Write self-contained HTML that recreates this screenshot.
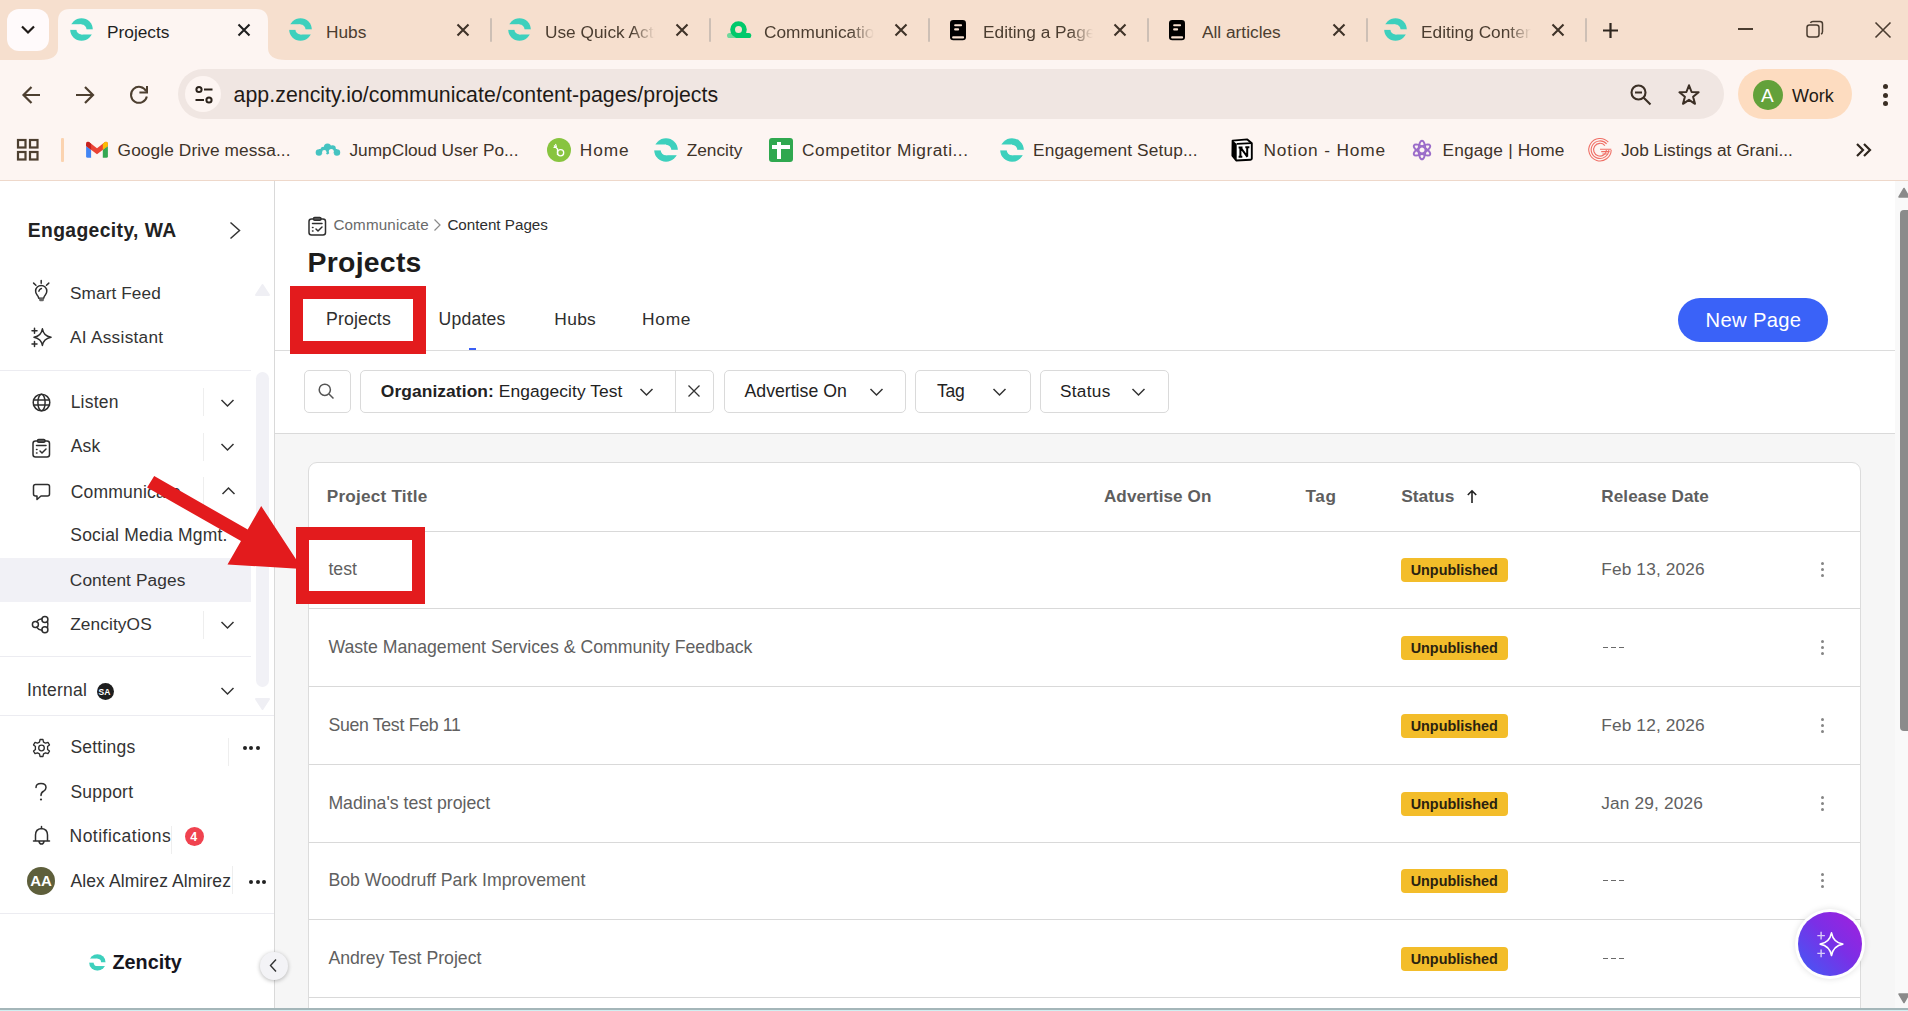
<!DOCTYPE html>
<html><head><meta charset="utf-8"><style>
html,body{margin:0;padding:0;width:1908px;height:1011px;overflow:hidden;background:#fff;}
body{position:relative;font-family:"Liberation Sans",sans-serif;}
.a{position:absolute;}
.t{position:absolute;line-height:1;white-space:nowrap;}
svg{overflow:visible}
</style></head><body>
<div class="a" style="left:0px;top:0px;width:1908px;height:60px;background:#f6dfce;"></div>
<div class="a" style="left:7px;top:9px;width:42px;height:42px;background:#fffafb;border-radius:12px"></div>
<svg class="a" style="left:7px;top:9px" width="42" height="42"><path d="M15 17.5 L21 23.5 L27 17.5" fill="none" stroke="#1f1a17" stroke-width="2.2"/></svg>
<svg class="a" style="left:40px;top:9px" width="246" height="51"><path d="M0 51 Q18 51 18 39 L18 12 Q18 0 30 0 L216 0 Q228 0 228 12 L228 39 Q228 51 246 51 Z" fill="#fdf5f2"/></svg>
<svg class="a" style="left:70px;top:18px;" width="23" height="23" viewBox="0 0 24 24"><defs><mask id="m70_18"><rect width="24" height="24" fill="#fff"/><circle cx="12" cy="12" r="5.3" fill="#000"/><rect x="-1" y="6.5" width="13" height="5.9" fill="#000"/><rect x="12" y="11.8" width="13" height="5.4" fill="#000"/></mask></defs><circle cx="12" cy="12" r="11.8" fill="#3dd0bd" mask="url(#m70_18)"/></svg>
<div class="t " style="left:107.00px;top:24px;font-size:17.3px;color:#1f1f1f;font-weight:400;letter-spacing:0px;width:110px;overflow:hidden;white-space:nowrap;">Projects</div>
<svg class="a" style="left:236.7px;top:23px" width="14" height="14"><path d="M1.5 1.5 L12.5 12.5 M12.5 1.5 L1.5 12.5" stroke="#1f1f1f" stroke-width="2.1"/></svg>
<svg class="a" style="left:289px;top:18px;" width="23" height="23" viewBox="0 0 24 24"><defs><mask id="m289_18"><rect width="24" height="24" fill="#fff"/><circle cx="12" cy="12" r="5.3" fill="#000"/><rect x="-1" y="6.5" width="13" height="5.9" fill="#000"/><rect x="12" y="11.8" width="13" height="5.4" fill="#000"/></mask></defs><circle cx="12" cy="12" r="11.8" fill="#3dd0bd" mask="url(#m289_18)"/></svg>
<div class="t " style="left:326.00px;top:24px;font-size:17.3px;color:#4b3d30;font-weight:400;letter-spacing:0px;width:110px;overflow:hidden;white-space:nowrap;">Hubs</div>
<svg class="a" style="left:455.7px;top:23px" width="14" height="14"><path d="M1.5 1.5 L12.5 12.5 M12.5 1.5 L1.5 12.5" stroke="#3f3328" stroke-width="2.1"/></svg>
<div class="a" style="left:490.3px;top:18px;width:2px;height:24px;background:#cdbfb5;border-radius:1px"></div>
<svg class="a" style="left:508px;top:18px;" width="23" height="23" viewBox="0 0 24 24"><defs><mask id="m508_18"><rect width="24" height="24" fill="#fff"/><circle cx="12" cy="12" r="5.3" fill="#000"/><rect x="-1" y="6.5" width="13" height="5.9" fill="#000"/><rect x="12" y="11.8" width="13" height="5.4" fill="#000"/></mask></defs><circle cx="12" cy="12" r="11.8" fill="#3dd0bd" mask="url(#m508_18)"/></svg>
<div class="t " style="left:545.00px;top:24px;font-size:17.3px;color:#4b3d30;font-weight:400;letter-spacing:0px;width:110px;overflow:hidden;white-space:nowrap;-webkit-mask-image:linear-gradient(90deg,#000 79%,transparent 100%);">Use Quick Actions</div>
<svg class="a" style="left:674.7px;top:23px" width="14" height="14"><path d="M1.5 1.5 L12.5 12.5 M12.5 1.5 L1.5 12.5" stroke="#3f3328" stroke-width="2.1"/></svg>
<div class="a" style="left:709.3px;top:18px;width:2px;height:24px;background:#cdbfb5;border-radius:1px"></div>
<svg class="a" style="left:726px;top:19px" width="28" height="22" viewBox="0 0 28 22"><rect x="1" y="14" width="24.2" height="5.1" rx="2.55" fill="#6fd89c"/><circle cx="12.5" cy="10.6" r="5.9" fill="none" stroke="#00c96b" stroke-width="4.8"/><rect x="9" y="14" width="16.2" height="5.1" rx="2.55" fill="#00c96b"/></svg>
<div class="t " style="left:764.00px;top:24px;font-size:17.3px;color:#4b3d30;font-weight:400;letter-spacing:0px;width:110px;overflow:hidden;white-space:nowrap;-webkit-mask-image:linear-gradient(90deg,#000 79%,transparent 100%);">Communications</div>
<svg class="a" style="left:893.7px;top:23px" width="14" height="14"><path d="M1.5 1.5 L12.5 12.5 M12.5 1.5 L1.5 12.5" stroke="#3f3328" stroke-width="2.1"/></svg>
<div class="a" style="left:928.3px;top:18px;width:2px;height:24px;background:#cdbfb5;border-radius:1px"></div>
<svg class="a" style="left:949.9px;top:19.7px" width="16" height="20.2" viewBox="0 0 16 20.2"><rect x="0" y="0" width="16" height="20.2" rx="3.3" fill="#000"/><rect x="4.1" y="4.2" width="8" height="2.1" rx="1" fill="#f6dfce"/><rect x="4.1" y="8.3" width="5" height="2.1" rx="1" fill="#f6dfce"/><rect x="2.1" y="16.2" width="12" height="2.2" rx="1" fill="#f6dfce"/></svg>
<div class="t " style="left:983.00px;top:24px;font-size:17.3px;color:#4b3d30;font-weight:400;letter-spacing:0px;width:110px;overflow:hidden;white-space:nowrap;-webkit-mask-image:linear-gradient(90deg,#000 79%,transparent 100%);">Editing a Page</div>
<svg class="a" style="left:1112.7px;top:23px" width="14" height="14"><path d="M1.5 1.5 L12.5 12.5 M12.5 1.5 L1.5 12.5" stroke="#3f3328" stroke-width="2.1"/></svg>
<div class="a" style="left:1147.3px;top:18px;width:2px;height:24px;background:#cdbfb5;border-radius:1px"></div>
<svg class="a" style="left:1168.9px;top:19.7px" width="16" height="20.2" viewBox="0 0 16 20.2"><rect x="0" y="0" width="16" height="20.2" rx="3.3" fill="#000"/><rect x="4.1" y="4.2" width="8" height="2.1" rx="1" fill="#f6dfce"/><rect x="4.1" y="8.3" width="5" height="2.1" rx="1" fill="#f6dfce"/><rect x="2.1" y="16.2" width="12" height="2.2" rx="1" fill="#f6dfce"/></svg>
<div class="t " style="left:1202.00px;top:24px;font-size:17.3px;color:#4b3d30;font-weight:400;letter-spacing:0px;width:110px;overflow:hidden;white-space:nowrap;">All articles</div>
<svg class="a" style="left:1331.7px;top:23px" width="14" height="14"><path d="M1.5 1.5 L12.5 12.5 M12.5 1.5 L1.5 12.5" stroke="#3f3328" stroke-width="2.1"/></svg>
<div class="a" style="left:1366.3px;top:18px;width:2px;height:24px;background:#cdbfb5;border-radius:1px"></div>
<svg class="a" style="left:1384px;top:18px;" width="23" height="23" viewBox="0 0 24 24"><defs><mask id="m1384_18"><rect width="24" height="24" fill="#fff"/><circle cx="12" cy="12" r="5.3" fill="#000"/><rect x="-1" y="6.5" width="13" height="5.9" fill="#000"/><rect x="12" y="11.8" width="13" height="5.4" fill="#000"/></mask></defs><circle cx="12" cy="12" r="11.8" fill="#3dd0bd" mask="url(#m1384_18)"/></svg>
<div class="t " style="left:1421.00px;top:24px;font-size:17.3px;color:#4b3d30;font-weight:400;letter-spacing:0px;width:110px;overflow:hidden;white-space:nowrap;-webkit-mask-image:linear-gradient(90deg,#000 79%,transparent 100%);">Editing Content</div>
<svg class="a" style="left:1550.7px;top:23px" width="14" height="14"><path d="M1.5 1.5 L12.5 12.5 M12.5 1.5 L1.5 12.5" stroke="#3f3328" stroke-width="2.1"/></svg>
<div class="a" style="left:1585.3px;top:18px;width:2px;height:24px;background:#cdbfb5;border-radius:1px"></div>
<svg class="a" style="left:1602px;top:22px" width="17" height="17"><path d="M8.5 1 V16 M1 8.5 H16" stroke="#2f261e" stroke-width="2.2"/></svg>
<div class="a" style="left:1738px;top:28px;width:15px;height:1.6px;background:#4b3d30;"></div>
<svg class="a" style="left:1805px;top:20px" width="20" height="20"><rect x="2" y="5" width="12" height="12" rx="2.5" fill="none" stroke="#4b3d30" stroke-width="1.5"/><path d="M5.5 3 Q6 1.5 8 1.5 L15 1.5 Q17.5 1.5 17.5 4 L17.5 11.5 Q17.5 13.5 16 14" fill="none" stroke="#4b3d30" stroke-width="1.5"/></svg>
<svg class="a" style="left:1874px;top:21px" width="18" height="18"><path d="M1.5 1.5 L16.5 16.5 M16.5 1.5 L1.5 16.5" stroke="#4b3d30" stroke-width="1.6"/></svg>
<div class="a" style="left:0px;top:60px;width:1908px;height:120px;background:#fdf5f2;"></div>
<svg class="a" style="left:20px;top:84px" width="22" height="22" viewBox="0 0 22 22"><path d="M20 11 H4 M11.5 3 L3.5 11 L11.5 19" fill="none" stroke="#4d3f30" stroke-width="2.2"/></svg>
<svg class="a" style="left:74px;top:84px" width="22" height="22" viewBox="0 0 22 22"><path d="M2 11 H18.5 M11 3 L19 11 L11 19" fill="none" stroke="#4d3f30" stroke-width="2.2"/></svg>
<svg class="a" style="left:128px;top:84px" width="22" height="22" viewBox="0 0 22 22"><path d="M18.2 7.3 A8 8 0 1 0 18.83 12.5" fill="none" stroke="#4d3f30" stroke-width="2"/><path d="M12.4 8.4 L19 8.4 L19 3" fill="none" stroke="#4d3f30" stroke-width="2" stroke-linecap="square"/></svg>
<div class="a" style="left:178px;top:69px;width:1546px;height:50px;background:#f0e6e2;border-radius:25px"></div>
<div class="a" style="left:185px;top:76px;width:36px;height:36px;background:#fdf5f2;border-radius:50%"></div>
<svg class="a" style="left:193px;top:84px" width="22" height="22" viewBox="0 0 22 22"><circle cx="6" cy="5.5" r="2.6" fill="none" stroke="#2b221b" stroke-width="2"/><path d="M11 5.5 H19.5" stroke="#2b221b" stroke-width="2"/><circle cx="16" cy="16" r="2.6" fill="none" stroke="#2b221b" stroke-width="2"/><path d="M2.5 16 H11" stroke="#2b221b" stroke-width="2"/></svg>
<div class="t " style="left:233.60px;top:85px;font-size:21.3px;color:#1f1a16;font-weight:400;letter-spacing:0.04px;">app.zencity.io/communicate/content-pages/projects</div>
<svg class="a" style="left:1629px;top:83px" width="24" height="24" viewBox="0 0 24 24"><circle cx="9.5" cy="9.5" r="7" fill="none" stroke="#3b2f25" stroke-width="2.1"/><path d="M6 9.5 H13 M14.7 14.7 L21.5 21.5" stroke="#3b2f25" stroke-width="2.1"/></svg>
<svg class="a" style="left:1677px;top:83px" width="24" height="24" viewBox="0 0 24 24"><path d="M12 2.3 L14.6 9 L21.6 9.3 L16.1 13.8 L18 20.8 L12 16.8 L6 20.8 L7.9 13.8 L2.4 9.3 L9.4 9 Z" fill="none" stroke="#3b2f25" stroke-width="2" stroke-linejoin="round"/></svg>
<div class="a" style="left:1738px;top:69px;width:114px;height:50px;background:#fddcc0;border-radius:25px"></div>
<div class="a" style="left:1753px;top:80px;width:30px;height:30px;background:#63a13a;border-radius:50%"></div>
<div class="t " style="left:1761.00px;top:86px;font-size:19px;color:#fff;font-weight:400;letter-spacing:0px;">A</div>
<div class="t " style="left:1792.00px;top:87px;font-size:18px;color:#1f1a15;font-weight:400;letter-spacing:0px;">Work</div>
<div class="a" style="left:1882.5px;top:84.0px;width:5px;height:5px;background:#3b2f25;border-radius:50%"></div>
<div class="a" style="left:1882.5px;top:92.5px;width:5px;height:5px;background:#3b2f25;border-radius:50%"></div>
<div class="a" style="left:1882.5px;top:101.0px;width:5px;height:5px;background:#3b2f25;border-radius:50%"></div>
<svg class="a" style="left:16px;top:138px" width="24" height="24" viewBox="0 0 24 24"><g fill="none" stroke="#4d3f30" stroke-width="2.2"><rect x="2" y="2" width="7.5" height="7.5"/><rect x="14" y="2" width="7.5" height="7.5"/><rect x="2" y="14" width="7.5" height="7.5"/><rect x="14" y="14" width="7.5" height="7.5"/></g></svg>
<div class="a" style="left:61px;top:138px;width:2.5px;height:24px;background:#fbd3b0;border-radius:1px"></div>
<svg class="a" style="left:85px;top:140px" width="24" height="20" viewBox="0 0 24 20"><path d="M1.1 6 L6.1 9.8 L6.1 17.8 L2.6 17.8 Q1.1 17.8 1.1 16.3 Z" fill="#4285f4"/><path d="M22.9 6 L17.8 9.8 L17.8 17.8 L21.4 17.8 Q22.9 17.8 22.9 16.3 Z" fill="#34a853"/><path d="M1.1 6 L1.1 4.2 Q1.1 1.2 4 2 L12 8.2 L20 2 Q22.9 1.2 22.9 4.2 L22.9 6 L12 14.3 Z" fill="#ea4335"/><path d="M17.8 3.7 L20 2 Q22.9 1.2 22.9 4.2 L22.9 6 L17.8 9.8 Z" fill="#fbbc04"/><path d="M1.1 6 L1.1 4.2 Q1.1 1.2 4 2 L6.1 3.7 L6.1 9.8 Z" fill="#c5221f"/></svg>
<div class="t " style="left:117.60px;top:142px;font-size:17.3px;color:#3e3329;font-weight:400;letter-spacing:0.1px;">Google Drive messa...</div>
<svg class="a" style="left:314px;top:141px" width="27" height="17" viewBox="0 0 27 17"><defs><mask id="jcm"><rect width="27" height="17" fill="#fff"/><circle cx="10.3" cy="11.3" r="2.2" fill="#000"/><circle cx="17.3" cy="10.6" r="2.5" fill="#000"/><rect x="7.8" y="12.6" width="4.6" height="5" fill="#000"/><rect x="14.9" y="12.3" width="5.2" height="5" fill="#000"/></mask></defs><g fill="#45c3c1" mask="url(#jcm)"><circle cx="5" cy="11.5" r="3.3"/><circle cx="9.5" cy="8.8" r="3"/><circle cx="13.5" cy="6.2" r="3.6"/><circle cx="18.5" cy="7.6" r="3.3"/><circle cx="22.9" cy="11.5" r="3.3"/><rect x="5" y="8" width="18" height="4.5"/><circle cx="13.3" cy="11.8" r="1.7"/></g></svg>
<div class="t " style="left:349.40px;top:142px;font-size:17.3px;color:#3e3329;font-weight:400;letter-spacing:0px;">JumpCloud User Po...</div>
<div class="a" style="left:546.8px;top:138px;width:24px;height:24px;background:#88c43f;border-radius:50%"></div>
<svg class="a" style="left:546.5px;top:137.5px" width="25" height="25" viewBox="0 0 25 25"><path d="M7 7.5 L10.5 11 L10.5 17" fill="none" stroke="#fff" stroke-width="1.3"/><circle cx="13.6" cy="14.8" r="3.1" fill="none" stroke="#fff" stroke-width="1.3"/><path d="M8.5 6 L9.5 9 M6.5 9.5 L9 9.5" stroke="#fff" stroke-width="1.1"/></svg>
<div class="t " style="left:579.80px;top:142px;font-size:17.3px;color:#3e3329;font-weight:400;letter-spacing:0.9px;">Home</div>
<svg class="a" style="left:653.5px;top:138px;" width="24" height="24" viewBox="0 0 24 24"><defs><mask id="m653_138"><rect width="24" height="24" fill="#fff"/><circle cx="12" cy="12" r="5.3" fill="#000"/><rect x="-1" y="6.5" width="13" height="5.9" fill="#000"/><rect x="12" y="11.8" width="13" height="5.4" fill="#000"/></mask></defs><circle cx="12" cy="12" r="11.8" fill="#3dd0bd" mask="url(#m653_138)"/></svg>
<div class="t " style="left:686.70px;top:142px;font-size:17.3px;color:#3e3329;font-weight:400;letter-spacing:0px;">Zencity</div>
<div class="a" style="left:769px;top:138px;width:24px;height:24px;background:#2fa84f;border-radius:3px"></div>
<div class="a" style="left:771.6px;top:145.3px;width:18.4px;height:4px;background:#fff;"></div>
<div class="a" style="left:776.9px;top:141.5px;width:4px;height:17.1px;background:#fff;"></div>
<div class="t " style="left:802.00px;top:142px;font-size:17.3px;color:#3e3329;font-weight:400;letter-spacing:0.52px;">Competitor Migrati...</div>
<svg class="a" style="left:999.8px;top:138px;" width="24" height="24" viewBox="0 0 24 24"><defs><mask id="m999_138"><rect width="24" height="24" fill="#fff"/><circle cx="12" cy="12" r="5.3" fill="#000"/><rect x="-1" y="6.5" width="13" height="5.9" fill="#000"/><rect x="12" y="11.8" width="13" height="5.4" fill="#000"/></mask></defs><circle cx="12" cy="12" r="11.8" fill="#3dd0bd" mask="url(#m999_138)"/></svg>
<div class="t " style="left:1033.00px;top:142px;font-size:17.3px;color:#3e3329;font-weight:400;letter-spacing:0.12px;">Engagement Setup...</div>
<svg class="a" style="left:1230px;top:137px" width="24" height="25" viewBox="0 0 24 25"><path d="M2.6 3.6 L17.3 2.4 L21.8 6.2 L21.8 21.4 Q21.8 22.6 20.5 22.7 L6.2 23.5 L2.4 18.6 Z" fill="#fff" stroke="#000" stroke-width="1.9" stroke-linejoin="round"/><path d="M2.6 3.6 L6.7 6.9 L6.7 23.2 L2.4 18.6 Z" fill="#000"/><path d="M6.7 6.9 L21.8 6.2" stroke="#000" stroke-width="1.8"/><path d="M10.4 10.5 V19.8 M10.6 10.5 L17.4 19.8 M17.2 10.2 V19.8 M8.6 10.5 H12.5 M15.3 10.2 H19.4 M8.6 19.8 H12.3" stroke="#000" stroke-width="2" fill="none"/></svg>
<div class="t " style="left:1263.50px;top:142px;font-size:17.3px;color:#3e3329;font-weight:400;letter-spacing:0.85px;">Notion - Home</div>
<svg class="a" style="left:1410px;top:138px" width="24" height="24" viewBox="0 0 24 24"><g fill="none" stroke="#9b6cc9" stroke-width="1.9"><ellipse cx="12" cy="12" rx="3.4" ry="9.3"/><ellipse cx="12" cy="12" rx="3.4" ry="9.3" transform="rotate(60 12 12)"/><ellipse cx="12" cy="12" rx="3.4" ry="9.3" transform="rotate(120 12 12)"/></g></svg>
<div class="t " style="left:1442.50px;top:142px;font-size:17.3px;color:#3e3329;font-weight:400;letter-spacing:0.18px;">Engage | Home</div>
<svg class="a" style="left:1587px;top:137px" width="26" height="26" viewBox="0 0 26 26"><g fill="none" stroke="#ef6f66" stroke-width="1.1"><path d="M21.3 5.2 A11.2 11.2 0 1 0 24.2 13"/><path d="M19.6 6.9 A8.8 8.8 0 1 0 21.8 13"/><path d="M17.9 8.6 A6.4 6.4 0 1 0 19.4 13"/><path d="M13 12.2 H24.3 M14.2 14.6 H22.6 M15.4 17 H20.6"/></g></svg>
<div class="t " style="left:1620.90px;top:142px;font-size:17.3px;color:#3e3329;font-weight:400;letter-spacing:0px;">Job Listings at Grani...</div>
<svg class="a" style="left:1855px;top:142px" width="17" height="16" viewBox="0 0 17 16"><path d="M2 2 L8 8 L2 14 M9 2 L15 8 L9 14" fill="none" stroke="#2f261e" stroke-width="2.2"/></svg>
<div class="a" style="left:0px;top:180px;width:1908px;height:1px;background:#eed8ca;"></div>
<div class="a" style="left:0px;top:181px;width:274px;height:830px;background:#ffffff;"></div>
<div class="a" style="left:274px;top:181px;width:1.2px;height:830px;background:#d9d9d9;"></div>
<div class="t " style="left:27.70px;top:221px;font-size:19.3px;color:#222;font-weight:700;letter-spacing:0.4px;">Engagecity, WA</div>
<svg class="a" style="left:229px;top:221px" width="13" height="19" viewBox="0 0 13 19"><path d="M1.5 1.5 L10.5 9.5 L1.5 17.5" fill="none" stroke="#333" stroke-width="1.5"/></svg>
<svg class="a" style="left:30px;top:278px" width="24" height="25" viewBox="0 0 24 25"><g fill="none" stroke="#2e2e2e" stroke-width="1.5" stroke-linecap="round" stroke-linejoin="round"><path d="M11.2 2.4 V5.3 M3.6 5.1 L5.9 7.2 M18.8 5.1 L16.5 7.2"/><path d="M8.7 20.2 Q8.4 18.3 7.1 16.9 A5.6 5.6 0 1 1 15.3 16.9 Q14 18.3 13.7 20.2 Z"/><path d="M8.9 13.2 Q9.3 11.2 11.4 10.5"/></g><rect x="9.1" y="20" width="4.8" height="3.3" rx="1.3" fill="#666"/></svg>
<svg class="a" style="left:30px;top:326px" width="24" height="22" viewBox="0 0 24 22"><g fill="none" stroke="#2e2e2e" stroke-width="1.5" stroke-linecap="round" stroke-linejoin="round"><path d="M12.4 2.8 Q13.5 9.8 21 11.3 Q13.5 12.8 12.4 19.5 Q11.3 12.8 4 11.3 Q11.3 9.8 12.4 2.8 Z"/><path d="M4.5 2.3 V7.3 M2 4.8 H7 M4.5 15.5 V20.5 M2 18 H7"/></g></svg>
<div class="t " style="left:70.00px;top:285px;font-size:17.2px;color:#333333;font-weight:400;letter-spacing:0.1px;">Smart Feed</div>
<div class="t " style="left:70.00px;top:329px;font-size:17.2px;color:#333333;font-weight:400;letter-spacing:0.3px;">AI Assistant</div>
<div class="a" style="left:0px;top:370px;width:251px;height:1px;background:#ececf1;"></div>
<svg class="a" style="left:254px;top:283px" width="17" height="14"><path d="M8.5 2 L15 12 L2 12 Z" fill="#efeff4" stroke="#efeff4" stroke-width="2" stroke-linejoin="round"/></svg>
<div class="a" style="left:256px;top:372px;width:13px;height:315px;background:#f1f1f6;border-radius:7px"></div>
<svg class="a" style="left:254px;top:697px" width="17" height="14"><path d="M8.5 12 L15 2 L2 2 Z" fill="#efeff4" stroke="#efeff4" stroke-width="2" stroke-linejoin="round"/></svg>
<svg class="a" style="left:31px;top:392px" width="21" height="21" viewBox="0 0 21 21"><g fill="none" stroke="#2e2e2e" stroke-width="1.5" stroke-linecap="round" stroke-linejoin="round"><circle cx="10.5" cy="10.5" r="8.3"/><ellipse cx="10.5" cy="10.5" rx="3.6" ry="8.3"/><path d="M2.5 8 H18.5 M2.5 13 H18.5"/></g></svg>
<div class="t " style="left:70.70px;top:394px;font-size:17.5px;color:#333333;font-weight:400;letter-spacing:0.2px;">Listen</div>
<svg class="a" style="left:31px;top:437px" width="21" height="22" viewBox="0 0 21 22"><g fill="none" stroke="#2e2e2e" stroke-width="1.5" stroke-linecap="round" stroke-linejoin="round"><rect x="2" y="4" width="16.5" height="16" rx="2.5"/><rect x="6.5" y="2.4" width="7.5" height="2.8" rx="1.2"/><path d="M5.5 8.5 H15 M5.5 12.5 H6 M5.5 16 H6 M9 14 L11 16 L15 12"/></g></svg>
<div class="t " style="left:70.70px;top:438px;font-size:17.5px;color:#333333;font-weight:400;letter-spacing:0.2px;">Ask</div>
<svg class="a" style="left:31px;top:482px" width="21" height="21" viewBox="0 0 21 21"><g fill="none" stroke="#2e2e2e" stroke-width="1.5" stroke-linecap="round" stroke-linejoin="round"><path d="M4.5 2.5 H16.5 Q18.5 2.5 18.5 4.5 L18.5 12 Q18.5 14 16.5 14 L10 14 L6 17.5 L6 14 L4.5 14 Q2.5 14 2.5 12 L2.5 4.5 Q2.5 2.5 4.5 2.5 Z"/></g></svg>
<div class="t " style="left:70.70px;top:484px;font-size:17.5px;color:#333333;font-weight:400;letter-spacing:0.2px;">Communicate</div>
<svg class="a" style="left:220px;top:398px" width="15" height="10" viewBox="0 0 15 10"><path d="M1.5 2 L7.5 8 L13.5 2" fill="none" stroke="#333" stroke-width="1.5"/></svg>
<div class="a" style="left:202.5px;top:388px;width:1px;height:28px;background:#eeeeee;"></div>
<svg class="a" style="left:220px;top:442px" width="15" height="10" viewBox="0 0 15 10"><path d="M1.5 2 L7.5 8 L13.5 2" fill="none" stroke="#333" stroke-width="1.5"/></svg>
<div class="a" style="left:203px;top:433px;width:1px;height:28px;background:#eeeeee;"></div>
<svg class="a" style="left:221px;top:486px" width="15" height="10" viewBox="0 0 15 10"><path d="M1.5 8 L7.5 2 L13.5 8" fill="none" stroke="#333" stroke-width="1.5"/></svg>
<div class="a" style="left:203px;top:477px;width:1px;height:28px;background:#eeeeee;"></div>
<div class="a" style="left:0px;top:558px;width:251px;height:44px;background:#f1f1f6;"></div>
<div class="t " style="left:70.30px;top:527px;font-size:17.5px;color:#333333;font-weight:400;letter-spacing:0.2px;">Social Media Mgmt.</div>
<div class="t " style="left:69.80px;top:572px;font-size:17.3px;color:#333333;font-weight:400;letter-spacing:0.1px;">Content Pages</div>
<svg class="a" style="left:30px;top:613px" width="22" height="22" viewBox="0 0 22 22"><g fill="none" stroke="#2e2e2e" stroke-width="1.5" stroke-linecap="round" stroke-linejoin="round"><circle cx="5.4" cy="11.4" r="3"/><circle cx="14.9" cy="6.4" r="3"/><circle cx="14.9" cy="16.7" r="3"/><path d="M6.6 8.6 Q8.5 6 12 5.8 M6.6 14.2 Q8.5 17 12 17.2 M17.5 8.5 Q18.3 11.5 17.5 14.6"/></g></svg>
<div class="t " style="left:70.20px;top:616px;font-size:17.3px;color:#333333;font-weight:400;letter-spacing:0.1px;">ZencityOS</div>
<svg class="a" style="left:220px;top:620px" width="15" height="10" viewBox="0 0 15 10"><path d="M1.5 2 L7.5 8 L13.5 2" fill="none" stroke="#333" stroke-width="1.5"/></svg>
<div class="a" style="left:203px;top:611px;width:1px;height:28px;background:#eeeeee;"></div>
<div class="a" style="left:0px;top:656px;width:251px;height:1px;background:#ececf1;"></div>
<div class="t " style="left:27.00px;top:682px;font-size:17.5px;color:#333333;font-weight:400;letter-spacing:0.2px;">Internal</div>
<div class="a" style="left:96.5px;top:683px;width:17px;height:17px;background:#1e1e1e;border-radius:50%"></div>
<div class="t " style="left:98.60px;top:688px;font-size:8.5px;color:#fff;font-weight:700;letter-spacing:0px;">SA</div>
<svg class="a" style="left:220px;top:686px" width="15" height="10" viewBox="0 0 15 10"><path d="M1.5 2 L7.5 8 L13.5 2" fill="none" stroke="#333" stroke-width="1.5"/></svg>
<div class="a" style="left:0px;top:715px;width:274px;height:1px;background:#ececf1;"></div>
<svg class="a" style="left:31px;top:737px" width="21" height="22" viewBox="0 0 24 24"><g fill="none" stroke="#2e2e2e" stroke-width="1.5" stroke-linecap="round" stroke-linejoin="round" stroke-width="1.6"><path d="M10.3 2.3 H13.7 L14.3 5.2 Q15.6 5.7 16.6 6.5 L19.4 5.5 L21.1 8.5 L18.9 10.4 Q19.1 12 18.9 13.6 L21.1 15.5 L19.4 18.5 L16.6 17.5 Q15.6 18.3 14.3 18.8 L13.7 21.7 H10.3 L9.7 18.8 Q8.4 18.3 7.4 17.5 L4.6 18.5 L2.9 15.5 L5.1 13.6 Q4.9 12 5.1 10.4 L2.9 8.5 L4.6 5.5 L7.4 6.5 Q8.4 5.7 9.7 5.2 Z"/><circle cx="12" cy="12" r="3.2"/></g></svg>
<div class="t " style="left:70.50px;top:739px;font-size:17.5px;color:#333333;font-weight:400;letter-spacing:0.2px;">Settings</div>
<div class="a" style="left:228px;top:738px;width:1px;height:28px;background:#eeeeee;"></div>
<div class="a" style="left:242.5px;top:746px;width:4px;height:4px;background:#222;border-radius:50%"></div>
<div class="a" style="left:249px;top:746px;width:4px;height:4px;background:#222;border-radius:50%"></div>
<div class="a" style="left:255.5px;top:746px;width:4px;height:4px;background:#222;border-radius:50%"></div>
<svg class="a" style="left:33px;top:781px" width="16" height="22" viewBox="0 0 16 22"><g fill="none" stroke="#2e2e2e" stroke-width="1.5" stroke-linecap="round" stroke-linejoin="round" stroke-width="1.6"><path d="M3 6.5 Q3 2.5 8 2.5 Q13 2.5 13 6.5 Q13 9 10.5 10.3 Q8 11.5 8 14.5"/></g><circle cx="8" cy="18.5" r="1.1" fill="#2e2e2e"/></svg>
<div class="t " style="left:70.50px;top:784px;font-size:17.5px;color:#333333;font-weight:400;letter-spacing:0.2px;">Support</div>
<svg class="a" style="left:31px;top:825px" width="21" height="21" viewBox="0 0 21 21"><g fill="none" stroke="#2e2e2e" stroke-width="1.5" stroke-linecap="round" stroke-linejoin="round" stroke-width="1.6"><path d="M2.5 16 H18.5 M4.5 16 L4.5 10 Q4.5 4 10.5 3.5 Q16.5 4 16.5 10 L16.5 16 M8 16.5 Q8.5 19 10.5 19 Q12.5 19 13 16.5 M10.5 1.5 V3.5"/></g></svg>
<div class="t " style="left:69.50px;top:828px;font-size:17.5px;color:#333333;font-weight:400;letter-spacing:0.5px;">Notifications</div>
<div class="a" style="left:171px;top:826px;width:1px;height:28px;background:#eeeeee;"></div>
<div class="a" style="left:185px;top:827px;width:19px;height:19px;background:#f0424f;border-radius:50%"></div>
<div class="t " style="left:190.30px;top:831px;font-size:12.5px;color:#fff;font-weight:700;letter-spacing:0px;">4</div>
<div class="a" style="left:26.7px;top:866.5px;width:28.6px;height:28.6px;background:#5e5f3b;border-radius:50%"></div>
<div class="t " style="left:30.20px;top:873px;font-size:15px;color:#fff;font-weight:700;letter-spacing:0px;">AA</div>
<div class="t " style="left:70.50px;top:873px;font-size:17.5px;color:#333333;font-weight:400;letter-spacing:0.1px;">Alex Almirez Almirez</div>
<div class="a" style="left:232px;top:866px;width:1px;height:28px;background:#eeeeee;"></div>
<div class="a" style="left:249px;top:879.5px;width:4px;height:4px;background:#222;border-radius:50%"></div>
<div class="a" style="left:255.5px;top:879.5px;width:4px;height:4px;background:#222;border-radius:50%"></div>
<div class="a" style="left:262px;top:879.5px;width:4px;height:4px;background:#222;border-radius:50%"></div>
<div class="a" style="left:0px;top:913px;width:274px;height:1px;background:#ececf1;"></div>
<svg class="a" style="left:88.7px;top:953.5px;" width="16.8" height="16.8" viewBox="0 0 24 24"><defs><mask id="m88_953"><rect width="24" height="24" fill="#fff"/><circle cx="12" cy="12" r="5.3" fill="#000"/><rect x="-1" y="6.5" width="13" height="5.9" fill="#000"/><rect x="12" y="11.8" width="13" height="5.4" fill="#000"/></mask></defs><circle cx="12" cy="12" r="11.8" fill="#3dd0bd" mask="url(#m88_953)"/></svg>
<div class="t " style="left:112.50px;top:953px;font-size:19.8px;color:#16161e;font-weight:700;letter-spacing:0px;">Zencity</div>
<div class="a" style="left:275px;top:181px;width:1620px;height:252px;background:#ffffff;"></div>
<svg class="a" style="left:307px;top:215px" width="21" height="22" viewBox="0 0 21 22"><g fill="none" stroke="#2e2e2e" stroke-width="1.5" stroke-linecap="round" stroke-linejoin="round"><rect x="2" y="4" width="16.5" height="16" rx="2.5"/><rect x="6.5" y="2.4" width="7.5" height="2.8" rx="1.2"/><path d="M5.5 8.5 H15 M5.5 12.5 H6 M5.5 16 H6 M9 14 L11 16 L15 12"/></g></svg>
<div class="t " style="left:333.40px;top:217px;font-size:15.2px;color:#6a6a6a;font-weight:400;letter-spacing:0.15px;">Communicate</div>
<svg class="a" style="left:433px;top:218px" width="9" height="14" viewBox="0 0 9 14"><path d="M1.5 1.5 L7 7 L1.5 12.5" fill="none" stroke="#8a8a8a" stroke-width="1.2"/></svg>
<div class="t " style="left:447.40px;top:217px;font-size:15.2px;color:#2e2e2e;font-weight:400;letter-spacing:0px;">Content Pages</div>
<div class="t " style="left:307.60px;top:248px;font-size:28.4px;color:#1c1c1c;font-weight:700;letter-spacing:0.25px;">Projects</div>
<div class="t " style="left:326.00px;top:311px;font-size:17.7px;color:#2e2e2e;font-weight:400;letter-spacing:0.12px;">Projects</div>
<div class="t " style="left:438.60px;top:311px;font-size:17.6px;color:#2e2e2e;font-weight:400;letter-spacing:0.2px;">Updates</div>
<div class="t " style="left:554.30px;top:311px;font-size:17.4px;color:#2e2e2e;font-weight:400;letter-spacing:0.3px;">Hubs</div>
<div class="t " style="left:642.00px;top:311px;font-size:17.4px;color:#2e2e2e;font-weight:400;letter-spacing:0.7px;">Home</div>
<div class="a" style="left:469px;top:347.5px;width:7px;height:2.5px;background:#3a5ef5;"></div>
<div class="a" style="left:275px;top:350px;width:1620px;height:1px;background:#dcdcdc;"></div>
<div class="a" style="left:1678px;top:298px;width:150px;height:44px;background:#3a62f8;border-radius:22px"></div>
<div class="t " style="left:1705.50px;top:310px;font-size:20.2px;color:#ffffff;font-weight:400;letter-spacing:0.35px;">New Page</div>
<div class="a" style="left:303.5px;top:370px;width:47px;height:43px;background:#fff;border:1px solid #dadada;border-radius:5px;box-sizing:border-box;background:#fff"></div>
<svg class="a" style="left:317px;top:382px" width="19" height="19" viewBox="0 0 19 19"><g fill="none" stroke="#555" stroke-width="1.5"><circle cx="7.8" cy="7.8" r="5.6"/><path d="M12 12 L16.5 16.5"/></g></svg>
<div class="a" style="left:360.4px;top:370px;width:353.6px;height:43px;background:#fff;border:1px solid #dadada;border-radius:5px;box-sizing:border-box;background:#fff"></div>
<div class="a" style="left:675px;top:371px;width:1px;height:41px;background:#dadada;"></div>
<div class="t " style="left:380.80px;top:383px;font-size:17.4px;color:#222;font-weight:400;letter-spacing:0.08px;"><b>Organization:</b> Engagecity Test</div>
<svg class="a" style="left:638.5px;top:387px" width="15" height="10" viewBox="0 0 15 10"><path d="M1.5 2 L7.5 8 L13.5 2" fill="none" stroke="#333" stroke-width="1.5"/></svg>
<svg class="a" style="left:687px;top:384px" width="14" height="14" viewBox="0 0 14 14"><path d="M1.5 1.5 L12.5 12.5 M12.5 1.5 L1.5 12.5" stroke="#333" stroke-width="1.3"/></svg>
<div class="a" style="left:724.4px;top:370px;width:181.5px;height:43px;background:#fff;border:1px solid #dadada;border-radius:5px;box-sizing:border-box;background:#fff"></div>
<div class="t " style="left:744.50px;top:383px;font-size:17.7px;color:#222;font-weight:400;letter-spacing:0px;">Advertise On</div>
<svg class="a" style="left:868.5px;top:387px" width="15" height="10" viewBox="0 0 15 10"><path d="M1.5 2 L7.5 8 L13.5 2" fill="none" stroke="#333" stroke-width="1.5"/></svg>
<div class="a" style="left:915.4px;top:370px;width:115.5px;height:43px;background:#fff;border:1px solid #dadada;border-radius:5px;box-sizing:border-box;background:#fff"></div>
<div class="t " style="left:937.00px;top:383px;font-size:17.5px;color:#222;font-weight:400;letter-spacing:-0.2px;">Tag</div>
<svg class="a" style="left:992px;top:387px" width="15" height="10" viewBox="0 0 15 10"><path d="M1.5 2 L7.5 8 L13.5 2" fill="none" stroke="#333" stroke-width="1.5"/></svg>
<div class="a" style="left:1040px;top:370px;width:129px;height:43px;background:#fff;border:1px solid #dadada;border-radius:5px;box-sizing:border-box;background:#fff"></div>
<div class="t " style="left:1060.00px;top:383px;font-size:17.2px;color:#222;font-weight:400;letter-spacing:0.3px;">Status</div>
<svg class="a" style="left:1131px;top:387px" width="15" height="10" viewBox="0 0 15 10"><path d="M1.5 2 L7.5 8 L13.5 2" fill="none" stroke="#333" stroke-width="1.5"/></svg>
<div class="a" style="left:275px;top:433px;width:1620px;height:1px;background:#dadada;"></div>
<div class="a" style="left:275px;top:434px;width:1620px;height:577px;background:#f6f6f6;"></div>
<div class="a" style="left:308px;top:462px;width:1553px;height:600px;background:#fff;border:1px solid #dcdcdc;border-radius:9px;box-sizing:border-box"></div>
<div class="t " style="left:326.80px;top:488px;font-size:17.2px;color:#5e5e5e;font-weight:700;letter-spacing:0.2px;">Project Title</div>
<div class="t " style="left:1103.90px;top:488px;font-size:17.1px;color:#5e5e5e;font-weight:700;letter-spacing:0.1px;">Advertise On</div>
<div class="t " style="left:1305.50px;top:488px;font-size:17.2px;color:#5e5e5e;font-weight:700;letter-spacing:0.6px;">Tag</div>
<div class="t " style="left:1401.20px;top:488px;font-size:17.4px;color:#5e5e5e;font-weight:700;letter-spacing:0px;">Status</div>
<svg class="a" style="left:1466px;top:489px" width="12" height="15" viewBox="0 0 12 15"><path d="M6 14 V2 M1.8 6 L6 1.8 L10.2 6" fill="none" stroke="#222" stroke-width="1.6"/></svg>
<div class="t " style="left:1601.30px;top:488px;font-size:17.1px;color:#5e5e5e;font-weight:700;letter-spacing:0.1px;">Release Date</div>
<div class="a" style="left:309px;top:531px;width:1551px;height:1px;background:#d9d9d9;"></div>
<div class="t " style="left:328.40px;top:561px;font-size:17.7px;color:#606060;font-weight:400;letter-spacing:0px;">test</div>
<div class="a" style="left:1401px;top:558px;width:107px;height:23.5px;background:#f3bd2a;border-radius:4px"></div>
<div class="t " style="left:1410.70px;top:563px;font-size:14.4px;color:#2a2210;font-weight:700;letter-spacing:0px;">Unpublished</div>
<div class="t " style="left:1601.20px;top:561px;font-size:17.3px;color:#606060;font-weight:400;letter-spacing:0.15px;">Feb 13, 2026</div>
<div class="a" style="left:1820.6px;top:561.5999999999999px;width:3.2px;height:3.2px;background:#858585;border-radius:50%"></div>
<div class="a" style="left:1820.6px;top:567.6999999999999px;width:3.2px;height:3.2px;background:#858585;border-radius:50%"></div>
<div class="a" style="left:1820.6px;top:573.8px;width:3.2px;height:3.2px;background:#858585;border-radius:50%"></div>
<div class="a" style="left:309px;top:608px;width:1551px;height:1px;background:#d9d9d9;"></div>
<div class="t " style="left:328.40px;top:639px;font-size:17.7px;color:#606060;font-weight:400;letter-spacing:0px;">Waste Management Services &amp; Community Feedback</div>
<div class="a" style="left:1401px;top:636px;width:107px;height:23.5px;background:#f3bd2a;border-radius:4px"></div>
<div class="t " style="left:1410.70px;top:641px;font-size:14.4px;color:#2a2210;font-weight:700;letter-spacing:0px;">Unpublished</div>
<div class="a" style="left:1603.0px;top:646.9px;width:5.4px;height:1.5px;background:#6a6a6a;"></div>
<div class="a" style="left:1610.75px;top:646.9px;width:5.4px;height:1.5px;background:#6a6a6a;"></div>
<div class="a" style="left:1618.5px;top:646.9px;width:5.4px;height:1.5px;background:#6a6a6a;"></div>
<div class="a" style="left:1820.6px;top:639.5999999999999px;width:3.2px;height:3.2px;background:#858585;border-radius:50%"></div>
<div class="a" style="left:1820.6px;top:645.6999999999999px;width:3.2px;height:3.2px;background:#858585;border-radius:50%"></div>
<div class="a" style="left:1820.6px;top:651.8px;width:3.2px;height:3.2px;background:#858585;border-radius:50%"></div>
<div class="a" style="left:309px;top:686px;width:1551px;height:1px;background:#d9d9d9;"></div>
<div class="t " style="left:328.40px;top:717px;font-size:17.7px;color:#606060;font-weight:400;letter-spacing:-0.3px;">Suen Test Feb 11</div>
<div class="a" style="left:1401px;top:714px;width:107px;height:23.5px;background:#f3bd2a;border-radius:4px"></div>
<div class="t " style="left:1410.70px;top:719px;font-size:14.4px;color:#2a2210;font-weight:700;letter-spacing:0px;">Unpublished</div>
<div class="t " style="left:1601.20px;top:717px;font-size:17.3px;color:#606060;font-weight:400;letter-spacing:0.15px;">Feb 12, 2026</div>
<div class="a" style="left:1820.6px;top:717.5999999999999px;width:3.2px;height:3.2px;background:#858585;border-radius:50%"></div>
<div class="a" style="left:1820.6px;top:723.6999999999999px;width:3.2px;height:3.2px;background:#858585;border-radius:50%"></div>
<div class="a" style="left:1820.6px;top:729.8px;width:3.2px;height:3.2px;background:#858585;border-radius:50%"></div>
<div class="a" style="left:309px;top:764px;width:1551px;height:1px;background:#d9d9d9;"></div>
<div class="t " style="left:328.40px;top:795px;font-size:17.7px;color:#606060;font-weight:400;letter-spacing:0px;">Madina's test project</div>
<div class="a" style="left:1401px;top:792px;width:107px;height:23.5px;background:#f3bd2a;border-radius:4px"></div>
<div class="t " style="left:1410.70px;top:797px;font-size:14.4px;color:#2a2210;font-weight:700;letter-spacing:0px;">Unpublished</div>
<div class="t " style="left:1601.20px;top:795px;font-size:17.3px;color:#606060;font-weight:400;letter-spacing:0.15px;">Jan 29, 2026</div>
<div class="a" style="left:1820.6px;top:795.5999999999999px;width:3.2px;height:3.2px;background:#858585;border-radius:50%"></div>
<div class="a" style="left:1820.6px;top:801.6999999999999px;width:3.2px;height:3.2px;background:#858585;border-radius:50%"></div>
<div class="a" style="left:1820.6px;top:807.8px;width:3.2px;height:3.2px;background:#858585;border-radius:50%"></div>
<div class="a" style="left:309px;top:842px;width:1551px;height:1px;background:#d9d9d9;"></div>
<div class="t " style="left:328.40px;top:872px;font-size:17.7px;color:#606060;font-weight:400;letter-spacing:0px;">Bob Woodruff Park Improvement</div>
<div class="a" style="left:1401px;top:869px;width:107px;height:23.5px;background:#f3bd2a;border-radius:4px"></div>
<div class="t " style="left:1410.70px;top:874px;font-size:14.4px;color:#2a2210;font-weight:700;letter-spacing:0px;">Unpublished</div>
<div class="a" style="left:1603.0px;top:879.9px;width:5.4px;height:1.5px;background:#6a6a6a;"></div>
<div class="a" style="left:1610.75px;top:879.9px;width:5.4px;height:1.5px;background:#6a6a6a;"></div>
<div class="a" style="left:1618.5px;top:879.9px;width:5.4px;height:1.5px;background:#6a6a6a;"></div>
<div class="a" style="left:1820.6px;top:872.5999999999999px;width:3.2px;height:3.2px;background:#858585;border-radius:50%"></div>
<div class="a" style="left:1820.6px;top:878.6999999999999px;width:3.2px;height:3.2px;background:#858585;border-radius:50%"></div>
<div class="a" style="left:1820.6px;top:884.8px;width:3.2px;height:3.2px;background:#858585;border-radius:50%"></div>
<div class="a" style="left:309px;top:919px;width:1551px;height:1px;background:#d9d9d9;"></div>
<div class="t " style="left:328.40px;top:950px;font-size:17.7px;color:#606060;font-weight:400;letter-spacing:0px;">Andrey Test Project</div>
<div class="a" style="left:1401px;top:947px;width:107px;height:23.5px;background:#f3bd2a;border-radius:4px"></div>
<div class="t " style="left:1410.70px;top:952px;font-size:14.4px;color:#2a2210;font-weight:700;letter-spacing:0px;">Unpublished</div>
<div class="a" style="left:1603.0px;top:957.9px;width:5.4px;height:1.5px;background:#6a6a6a;"></div>
<div class="a" style="left:1610.75px;top:957.9px;width:5.4px;height:1.5px;background:#6a6a6a;"></div>
<div class="a" style="left:1618.5px;top:957.9px;width:5.4px;height:1.5px;background:#6a6a6a;"></div>
<div class="a" style="left:1820.6px;top:950.5999999999999px;width:3.2px;height:3.2px;background:#858585;border-radius:50%"></div>
<div class="a" style="left:1820.6px;top:956.6999999999999px;width:3.2px;height:3.2px;background:#858585;border-radius:50%"></div>
<div class="a" style="left:1820.6px;top:962.8px;width:3.2px;height:3.2px;background:#858585;border-radius:50%"></div>
<div class="a" style="left:309px;top:997px;width:1551px;height:1px;background:#d9d9d9;"></div>
<div class="a" style="left:1895px;top:181px;width:13px;height:830px;background:#f9f9f9;"></div>
<svg class="a" style="left:1897px;top:187px" width="12" height="12"><path d="M7 1.5 L12 10 L2 10 Z" fill="#8a8a8a" stroke="#8a8a8a" stroke-width="1.5" stroke-linejoin="round"/></svg>
<div class="a" style="left:1900px;top:209.5px;width:10px;height:521px;background:#8b8b8b;border-radius:4px 0 0 4px"></div>
<svg class="a" style="left:1897px;top:993px" width="12" height="12"><path d="M7 9.5 L12 1 L2 1 Z" fill="#8a8a8a" stroke="#8a8a8a" stroke-width="1.5" stroke-linejoin="round"/></svg>
<div class="a" style="left:1795px;top:909px;width:70px;height:70px;background:#fff;border-radius:50%;box-shadow:0 0 6px rgba(0,0,0,0.12)"></div>
<div class="a" style="left:1798px;top:912px;width:64px;height:64px;background:linear-gradient(45deg,#3f5cf6 0%,#7b2fe6 55%,#a31fdc 100%);border-radius:50%"></div>
<svg class="a" style="left:1812px;top:926px" width="36" height="36" viewBox="0 0 36 36"><path d="M19.5 6.8 Q21.3 16.3 30.8 18.1 Q21.3 19.9 19.5 29.5 Q17.7 19.9 8.2 18.1 Q17.7 16.3 19.5 6.8 Z" fill="none" stroke="#fff" stroke-width="1.6" stroke-linejoin="round"/><path d="M9.1 5.8 V13.4 M5.3 9.6 H12.9 M9.1 23.6 V31.2 M5.3 27.4 H12.9" stroke="#fff" stroke-opacity="0.75" stroke-width="1.4"/></svg>
<div class="a" style="left:259.5px;top:951.5px;width:28px;height:28px;background:#f3f3f6;border-radius:50%;box-shadow:0 1px 4px rgba(0,0,0,0.28)"></div>
<svg class="a" style="left:268px;top:958px" width="10" height="15" viewBox="0 0 10 15"><path d="M8 1.5 L2.5 7.5 L8 13.5" fill="none" stroke="#333" stroke-width="1.4"/></svg>
<div class="a" style="left:290.4px;top:286px;width:135.6px;height:67.7px;background:transparent;border:13.5px solid #e31b1d;box-sizing:border-box"></div>
<div class="a" style="left:296.4px;top:526.5px;width:128.3px;height:77px;background:transparent;border:13.5px solid #e31b1d;box-sizing:border-box"></div>
<svg class="a" style="left:0;top:0" width="1908" height="1011"><path d="M154.2 476.1 L247.7 529.5 L261.2 506 L302.4 569 L227.5 564.5 L241 541.1 L147.1 487.5 Z" fill="#e31b1d"/></svg>
<div class="a" style="left:0px;top:1008px;width:1908px;height:1.6px;background:#a4b6b9;"></div>
<div class="a" style="left:0px;top:1009.6px;width:1908px;height:1.4px;background:#cfeff1;"></div>
</body></html>
